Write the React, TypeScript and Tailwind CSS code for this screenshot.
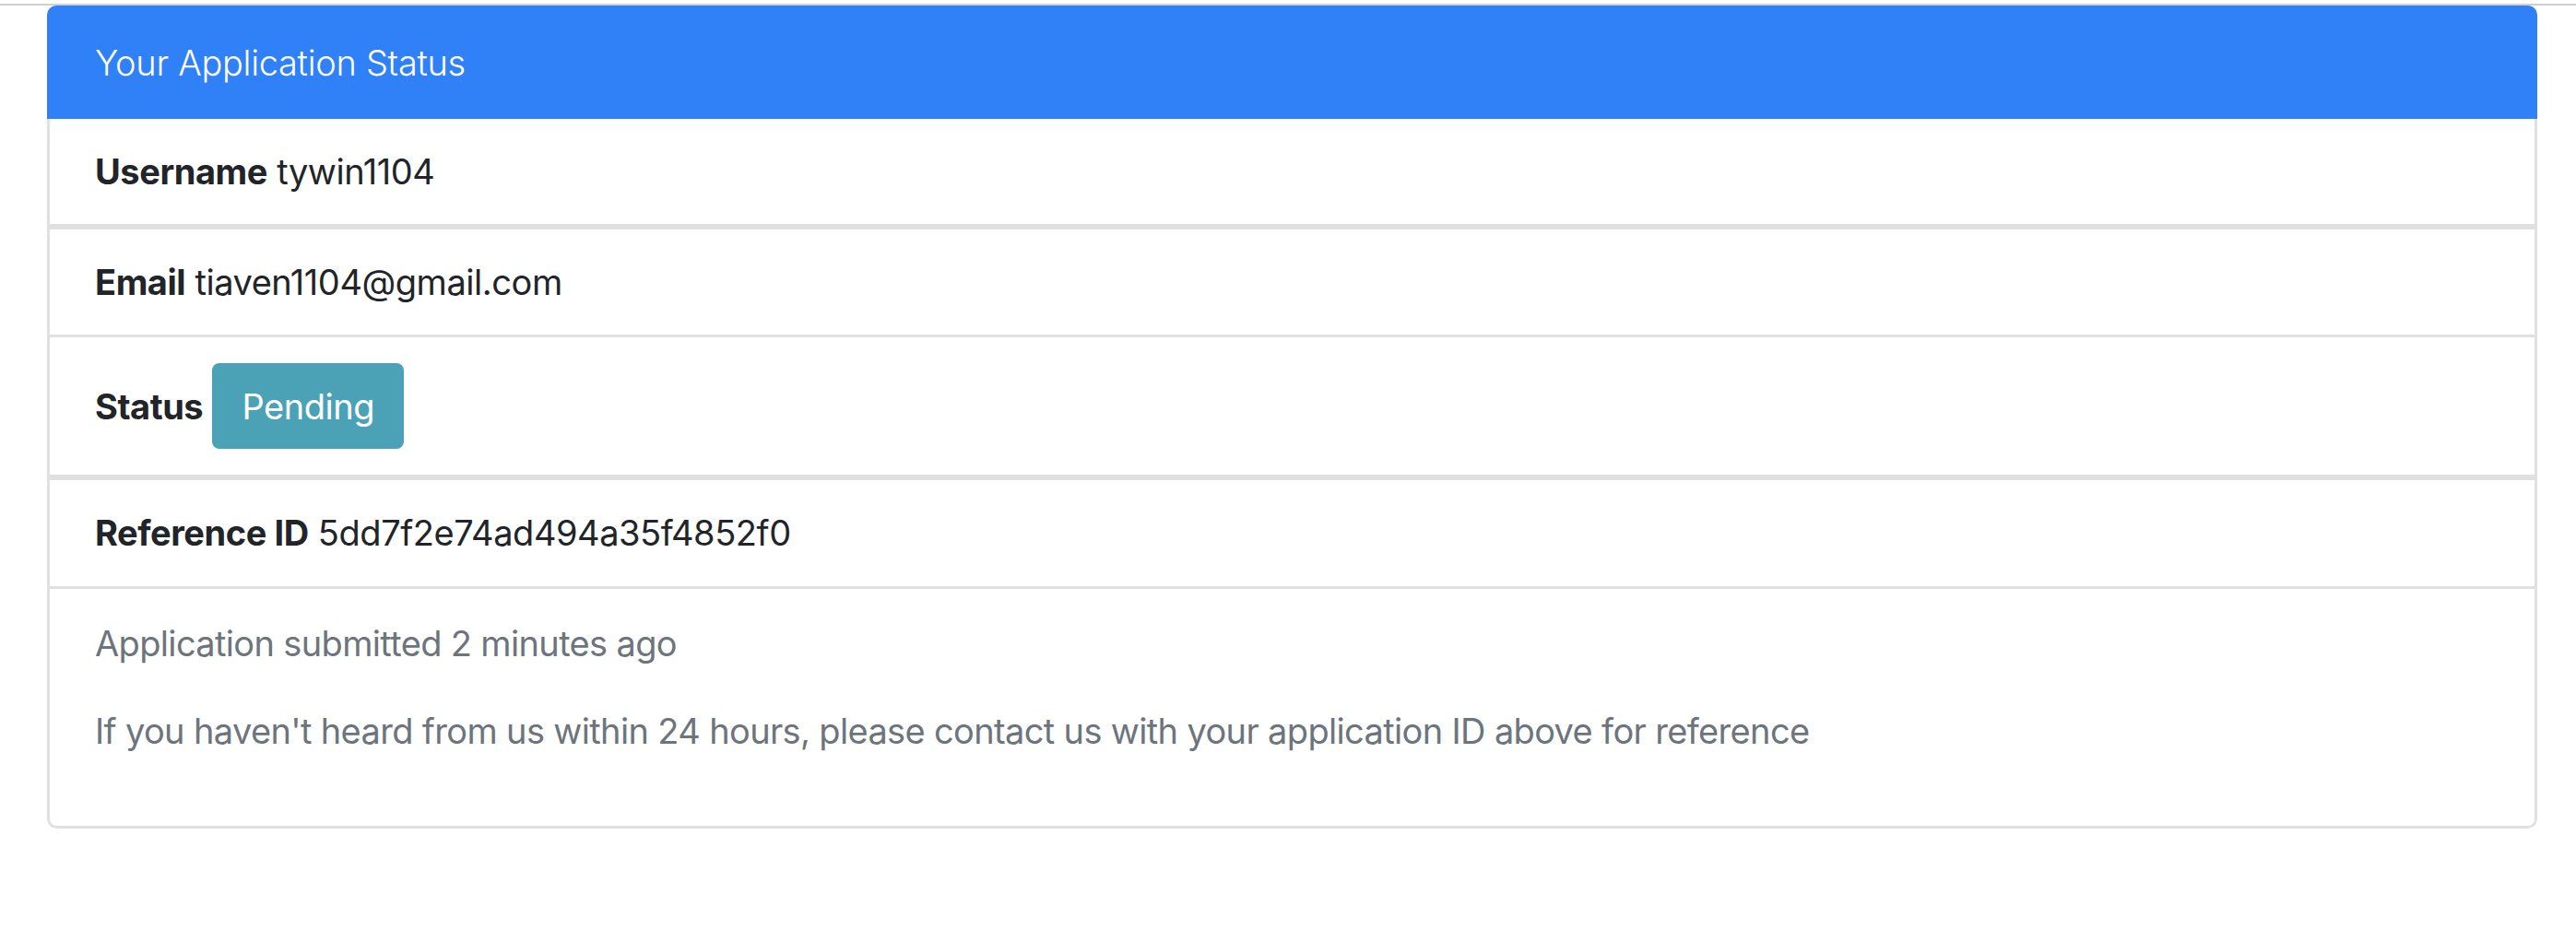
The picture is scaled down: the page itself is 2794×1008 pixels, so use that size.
import React from 'react';

type Row = { label: string; value: string; thick?: boolean };

const rows: Row[] = [
  { label: 'Username', value: 'tywin1104', thick: true },
  { label: 'Email', value: 'tiaven1104@gmail.com' },
];

const App: React.FC = () => {
  return (
    <div className="min-h-screen bg-white pt-[4px] font-['Inter',sans-serif] text-[38px] tracking-[-0.45px] text-[#212529]">
      <div className="h-[2px] bg-[#cfcfcf]" />
      <div className="ml-[51px] mr-[42px] rounded-[10px] overflow-hidden">
        {/* header */}
        <div className="h-[123px] flex items-center pl-[52px] bg-[#3080f8] text-white font-light leading-[60px] tracking-[-0.3px]">
          Your Application Status
        </div>

        <div className="border-x-[3px] border-b-[3px] border-[#e0e0e0] rounded-b-[10px]">
          {rows.map((r) => (
            <div
              key={r.label}
              className={`pl-[49px] py-[27px] leading-[60px] border-[#e0e0e0] ${r.thick ? 'border-b-[6px]' : 'border-b-[3px]'}`}
            >
              <span className="font-bold">{r.label}</span> {r.value}
            </div>
          ))}

          <div className="pl-[49px] py-[28px] leading-[60px] border-b-[6px] border-[#e0e0e0]">
            <span className="font-bold">Status</span>{' '}
            <span className="inline-block rounded-[8px] bg-[#4ba2b6] text-white px-[32px] py-[16.5px] leading-[60px]">
              Pending
            </span>
          </div>

          <div className="pl-[49px] pt-[27px] pb-[28px] leading-[60px] border-b-[3px] border-[#e0e0e0]">
            <span className="font-bold">Reference ID</span> 5dd7f2e74ad494a35f4852f0
          </div>

          {/* footer notes */}
          <div className="pl-[49px] pt-[29px] pb-[38px] leading-[60px] text-[#6c757d] tracking-[-0.65px]">
            <p className="mb-[35px]">Application submitted 2 minutes ago</p>
            <p className="mb-[35px]">
              If you haven't heard from us within 24 hours, please contact us with your application ID above for reference
            </p>
          </div>
        </div>
      </div>
    </div>
  );
};

export default App;
